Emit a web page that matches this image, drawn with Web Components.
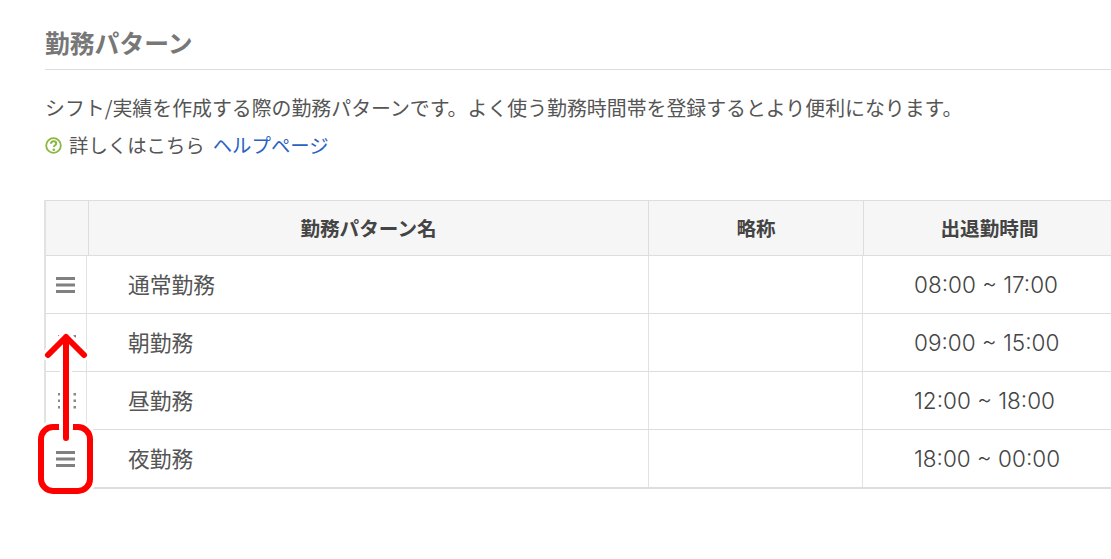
<!DOCTYPE html>
<html lang="ja">
<head>
<meta charset="utf-8">
<style>
  html, body { margin: 0; height: 100%; background: #fff; overflow: hidden; }
  body {
    font-family: "Noto Sans CJK JP", "Liberation Sans", sans-serif;
    color: #555;
  }
</style>
</head>
<body>
<pattern-page>
  <page-heading>勤務パターン</page-heading>
  <page-intro>
    シフト/実績を作成する際の勤務パターンです。よく使う勤務時間帯を登録するとより便利になります。
    <span slot="help-text">詳しくはこちら</span>
    <span slot="help-link">ヘルプページ</span>
  </page-intro>
  <pattern-table>
    <pattern-row slot="rows" name="通常勤務" time="08:00 ~ 17:00"></pattern-row>
    <pattern-row slot="rows" name="朝勤務" time="09:00 ~ 15:00" handle="dots"></pattern-row>
    <pattern-row slot="rows" name="昼勤務" time="12:00 ~ 18:00" handle="dots"></pattern-row>
    <pattern-row slot="rows" name="夜勤務" time="18:00 ~ 00:00" last></pattern-row>
  </pattern-table>
  <drag-marker></drag-marker>
</pattern-page>

<script>
class PatternPage extends HTMLElement {
  constructor() {
    super();
    this.attachShadow({ mode: "open" });
    this.shadowRoot.innerHTML = `
      <style>
        :host {
          display: flex;
          flex-direction: column;
          position: relative;
          box-sizing: border-box;
          width: 1111px;
          height: 559px;
          padding: 25px 0 0 45px;
          overflow: hidden;
        }
      </style>
      <slot></slot>
    `;
  }
}

class PageHeading extends HTMLElement {
  constructor() {
    super();
    this.attachShadow({ mode: "open" });
    this.shadowRoot.innerHTML = `
      <style>
        :host {
          display: block;
          height: 44px;
          border-bottom: 1px solid #ddd;
          font-size: 24.8px;
          line-height: 34px;
          font-weight: 700;
          color: #777;
        }
      </style>
      <slot></slot>
    `;
  }
}

class PageIntro extends HTMLElement {
  constructor() {
    super();
    this.attachShadow({ mode: "open" });
    this.shadowRoot.innerHTML = `
      <style>
        :host {
          display: block;
          margin-top: 24px;
          height: 106px;
          font-size: 19.9px;
          color: #555;
        }
        p { margin: 0; line-height: 28px; white-space: nowrap; }
        .help {
          display: flex;
          align-items: center;
          gap: 7px;
          margin-top: 9px;
          font-size: 19.4px;
        }
        .help svg { flex: none; }
        .link { color: #2a62c4; margin-left: 1px; }
      </style>
      <p><slot></slot></p>
      <p class="help">
        <svg width="17" height="17" viewBox="0 0 17 17">
          <circle cx="8.5" cy="8.5" r="7.3" fill="none" stroke="#8ab83e" stroke-width="1.8"/>
          <path d="M5.900 6.800c.1-1.700 1.200-2.600 2.700-2.600s2.600.9 2.600 2.200c0 1.100-.7 1.600-1.400 2.100-.6.4-.9.800-.9 1.500" fill="none" stroke="#8ab83e" stroke-width="2"/>
          <circle cx="8.800" cy="12.800" r="1.300" fill="#8ab83e"/>
        </svg>
        <span><slot name="help-text"></slot></span>
        <span class="link"><slot name="help-link"></slot></span>
      </p>
    `;
  }
}

class PatternTable extends HTMLElement {
  constructor() {
    super();
    this.attachShadow({ mode: "open" });
    this.shadowRoot.innerHTML = `
      <style>
        :host {
          display: block;
          margin-left: -1px;
          width: 1200px;
          border-left: 2px solid #e2e2e2;
          font-size: 19.6px;
        }
        .head {
          display: grid;
          grid-template-columns: 42px 560px 215px 1fr;
          height: 54px;
          border-top: 1px solid #ddd;
          border-bottom: 1px solid #ddd;
          background: #f6f6f6;
          color: #444;
          font-weight: 700;
        }
        .head div {
          display: flex;
          align-items: center;
          justify-content: center;
          padding-bottom: 1px;
          border-left: 1px solid #ddd;
        }
        .head div:first-child { border-left: 0; }
        .head .time { padding-right: 131px; }
      </style>
      <div class="head">
        <div></div>
        <div>勤務パターン名</div>
        <div>略称</div>
        <div class="time">出退勤時間</div>
      </div>
      <slot name="rows"></slot>
    `;
  }
}

class PatternRow extends HTMLElement {
  constructor() {
    super();
    this.attachShadow({ mode: "open" });
  }

  connectedCallback() {
    this.render();
  }

  renderHandle() {
    if (this.getAttribute("handle") === "dots") {
      return `<svg width="20" height="18" viewBox="0 0 20 18">
        <path d="M2 1h2.500v2.500H2zM2 7.500h2.500v2.500H2zM2 14h2.500v2.500H2zM17.500 1H20v2.500h-2.500zM17.500 7.500H20v2.500h-2.500zM17.500 14H20v2.500h-2.500z" fill="#888"/>
      </svg>`;
    }
    return `<svg width="19" height="16" viewBox="0 0 19 16">
      <path d="M0 0h19v3H0zM0 6.500h19v3H0zM0 13h19v3H0z" fill="#808080"/>
    </svg>`;
  }

  render() {
    const last = this.hasAttribute("last");
    this.shadowRoot.innerHTML = `
      <style>
        :host {
          display: grid;
          grid-template-columns: 40px 562px 214px 1fr;
          height: 57px;
          border-bottom: ${last ? "2px" : "1px"} solid #ddd;
          color: #555;
          font-size: 21.75px;
        }
        div { display: flex; align-items: center; border-left: 1px solid #e2e2e2; }
        .handle { border-left: 0; justify-content: center; padding-right: 1px; }
        .name { padding: 0 0 2px 41px; box-sizing: border-box; }
        .time {
          padding: 0 0 1px 51px;
          font-size: 22.5px;
          font-family: "Inter", "Liberation Sans", sans-serif;
          font-weight: 300;
          color: #444;
        }
      </style>
      <div class="handle">${this.renderHandle()}</div>
      <div class="name">${this.getAttribute("name")}</div>
      <div></div>
      <div class="time">${this.getAttribute("time")}</div>
    `;
  }
}

// 赤い矢印と枠（スクリーンショットの注釈）。白いふちで下の罫線を切る
class DragMarker extends HTMLElement {
  constructor() {
    super();
    this.attachShadow({ mode: "open" });
    const arrow = "M30 108V7M12 25L30 7L48 25";
    const box = "M23 97H17a12 12 0 0 0-12 12v40a12 12 0 0 0 12 12h25a12 12 0 0 0 12-12v-40a12 12 0 0 0-12-12h-5";
    this.shadowRoot.innerHTML = `
      <style>
        :host { position: absolute; left: 36px; top: 330px; width: 64px; height: 170px; }
        svg { display: block; }
      </style>
      <svg width="64" height="170" viewBox="0 0 64 170" fill="none" stroke-linejoin="round">
        <path d="${arrow}" stroke="#fff" stroke-width="12" stroke-linecap="round"/>
        <path d="${box}" stroke="#fff" stroke-width="12"/>
        <path d="${arrow}" stroke="#f00" stroke-width="6" stroke-linecap="round"/>
        <path d="${box}" stroke="#f00" stroke-width="6"/>
      </svg>
    `;
  }
}

customElements.define("pattern-page", PatternPage);
customElements.define("page-heading", PageHeading);
customElements.define("page-intro", PageIntro);
customElements.define("pattern-table", PatternTable);
customElements.define("pattern-row", PatternRow);
customElements.define("drag-marker", DragMarker);
</script>
</body>
</html>
